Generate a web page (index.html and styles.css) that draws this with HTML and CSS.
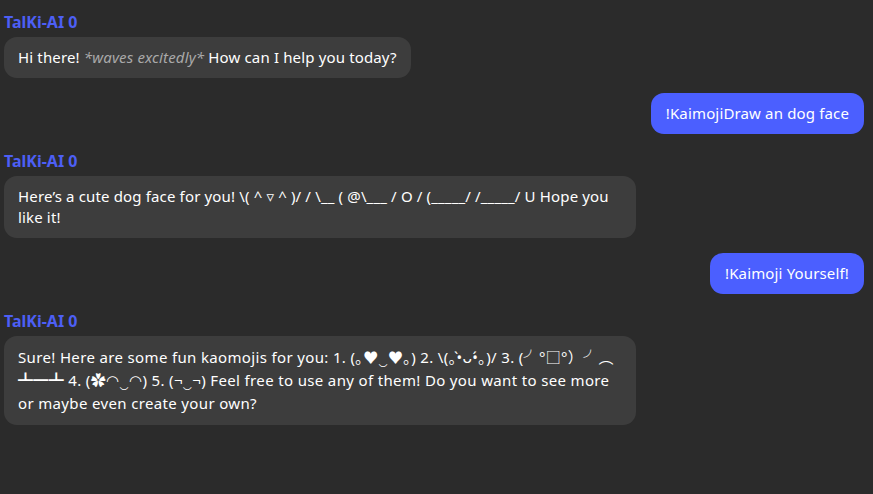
FILE: index.html
```html
<!DOCTYPE html>
<html lang="en">
<head>
<meta charset="utf-8">
<title>TalKi-AI chat</title>
<link rel="stylesheet" href="styles.css">
</head>
<body>
<div class="chat">
  <div class="group bot">
    <div class="name">TalKi-AI 0</div>
    <div class="bubble">Hi there! <em>*waves excitedly*</em> How can I help you today?</div>
  </div>
  <div class="group user">
    <div class="bubble">!KaimojiDraw an dog face</div>
  </div>
  <div class="group bot">
    <div class="name">TalKi-AI 0</div>
    <div class="bubble">Here’s a cute dog face for you! \( ^ ▿ ^ )/ / \__ ( @\___ / O / (_____/ /_____/ U Hope you like it!</div>
  </div>
  <div class="group user">
    <div class="bubble">!Kaimoji Yourself!</div>
  </div>
  <div class="group bot">
    <div class="name">TalKi-AI 0</div>
    <div class="bubble kaomoji">Sure! Here are some fun kaomojis for you: 1. (｡♥‿♥｡) 2. \(｡•̀ᴗ•́｡)/ 3. (╯°□°）╯︵ ┻━┻ 4. (✿◠‿◠) 5. (¬‿¬) Feel free to use any of them! Do you want to see more or maybe even create your own?</div>
  </div>
</div>
</body>
</html>
```

FILE: styles.css
```css
html, body {
  margin: 0;
  padding: 0;
  background: #2b2b2b;
}
body {
  font-family: "Segoe UI", "Noto Sans", "DejaVu Sans", sans-serif;
  font-size: 15px;
  color: #ffffff;
}
.chat {
  display: flex;
  flex-direction: column;
  gap: 15px;
  padding: 12px 9px 12px 4px;
}
.group {
  display: flex;
  flex-direction: column;
}
.group.bot {
  align-items: flex-start;
}
.group.user {
  align-items: flex-end;
}
.user + .bot {
  margin-top: 2px;
}
.name {
  color: #4d5ff5;
  font-weight: 700;
  font-size: 16px;
  line-height: 20px;
  margin-bottom: 5px;
}
.bubble {
  max-width: 604px;
  padding: 10px 14px;
  line-height: 21px;
  letter-spacing: 0.15px;
  border-radius: 13px;
  background: #3d3d3d;
}
.bubble.kaomoji {
  font-family: "Segoe UI", "Noto Sans", "Noto Sans CJK JP", "DejaVu Sans", sans-serif;
  line-height: 23px;
  letter-spacing: 0.35px;
}
.user .bubble {
  background: #4b5fff;
  padding: 10px 15px;
}
.bubble em {
  color: #a9a9a9;
}
```
